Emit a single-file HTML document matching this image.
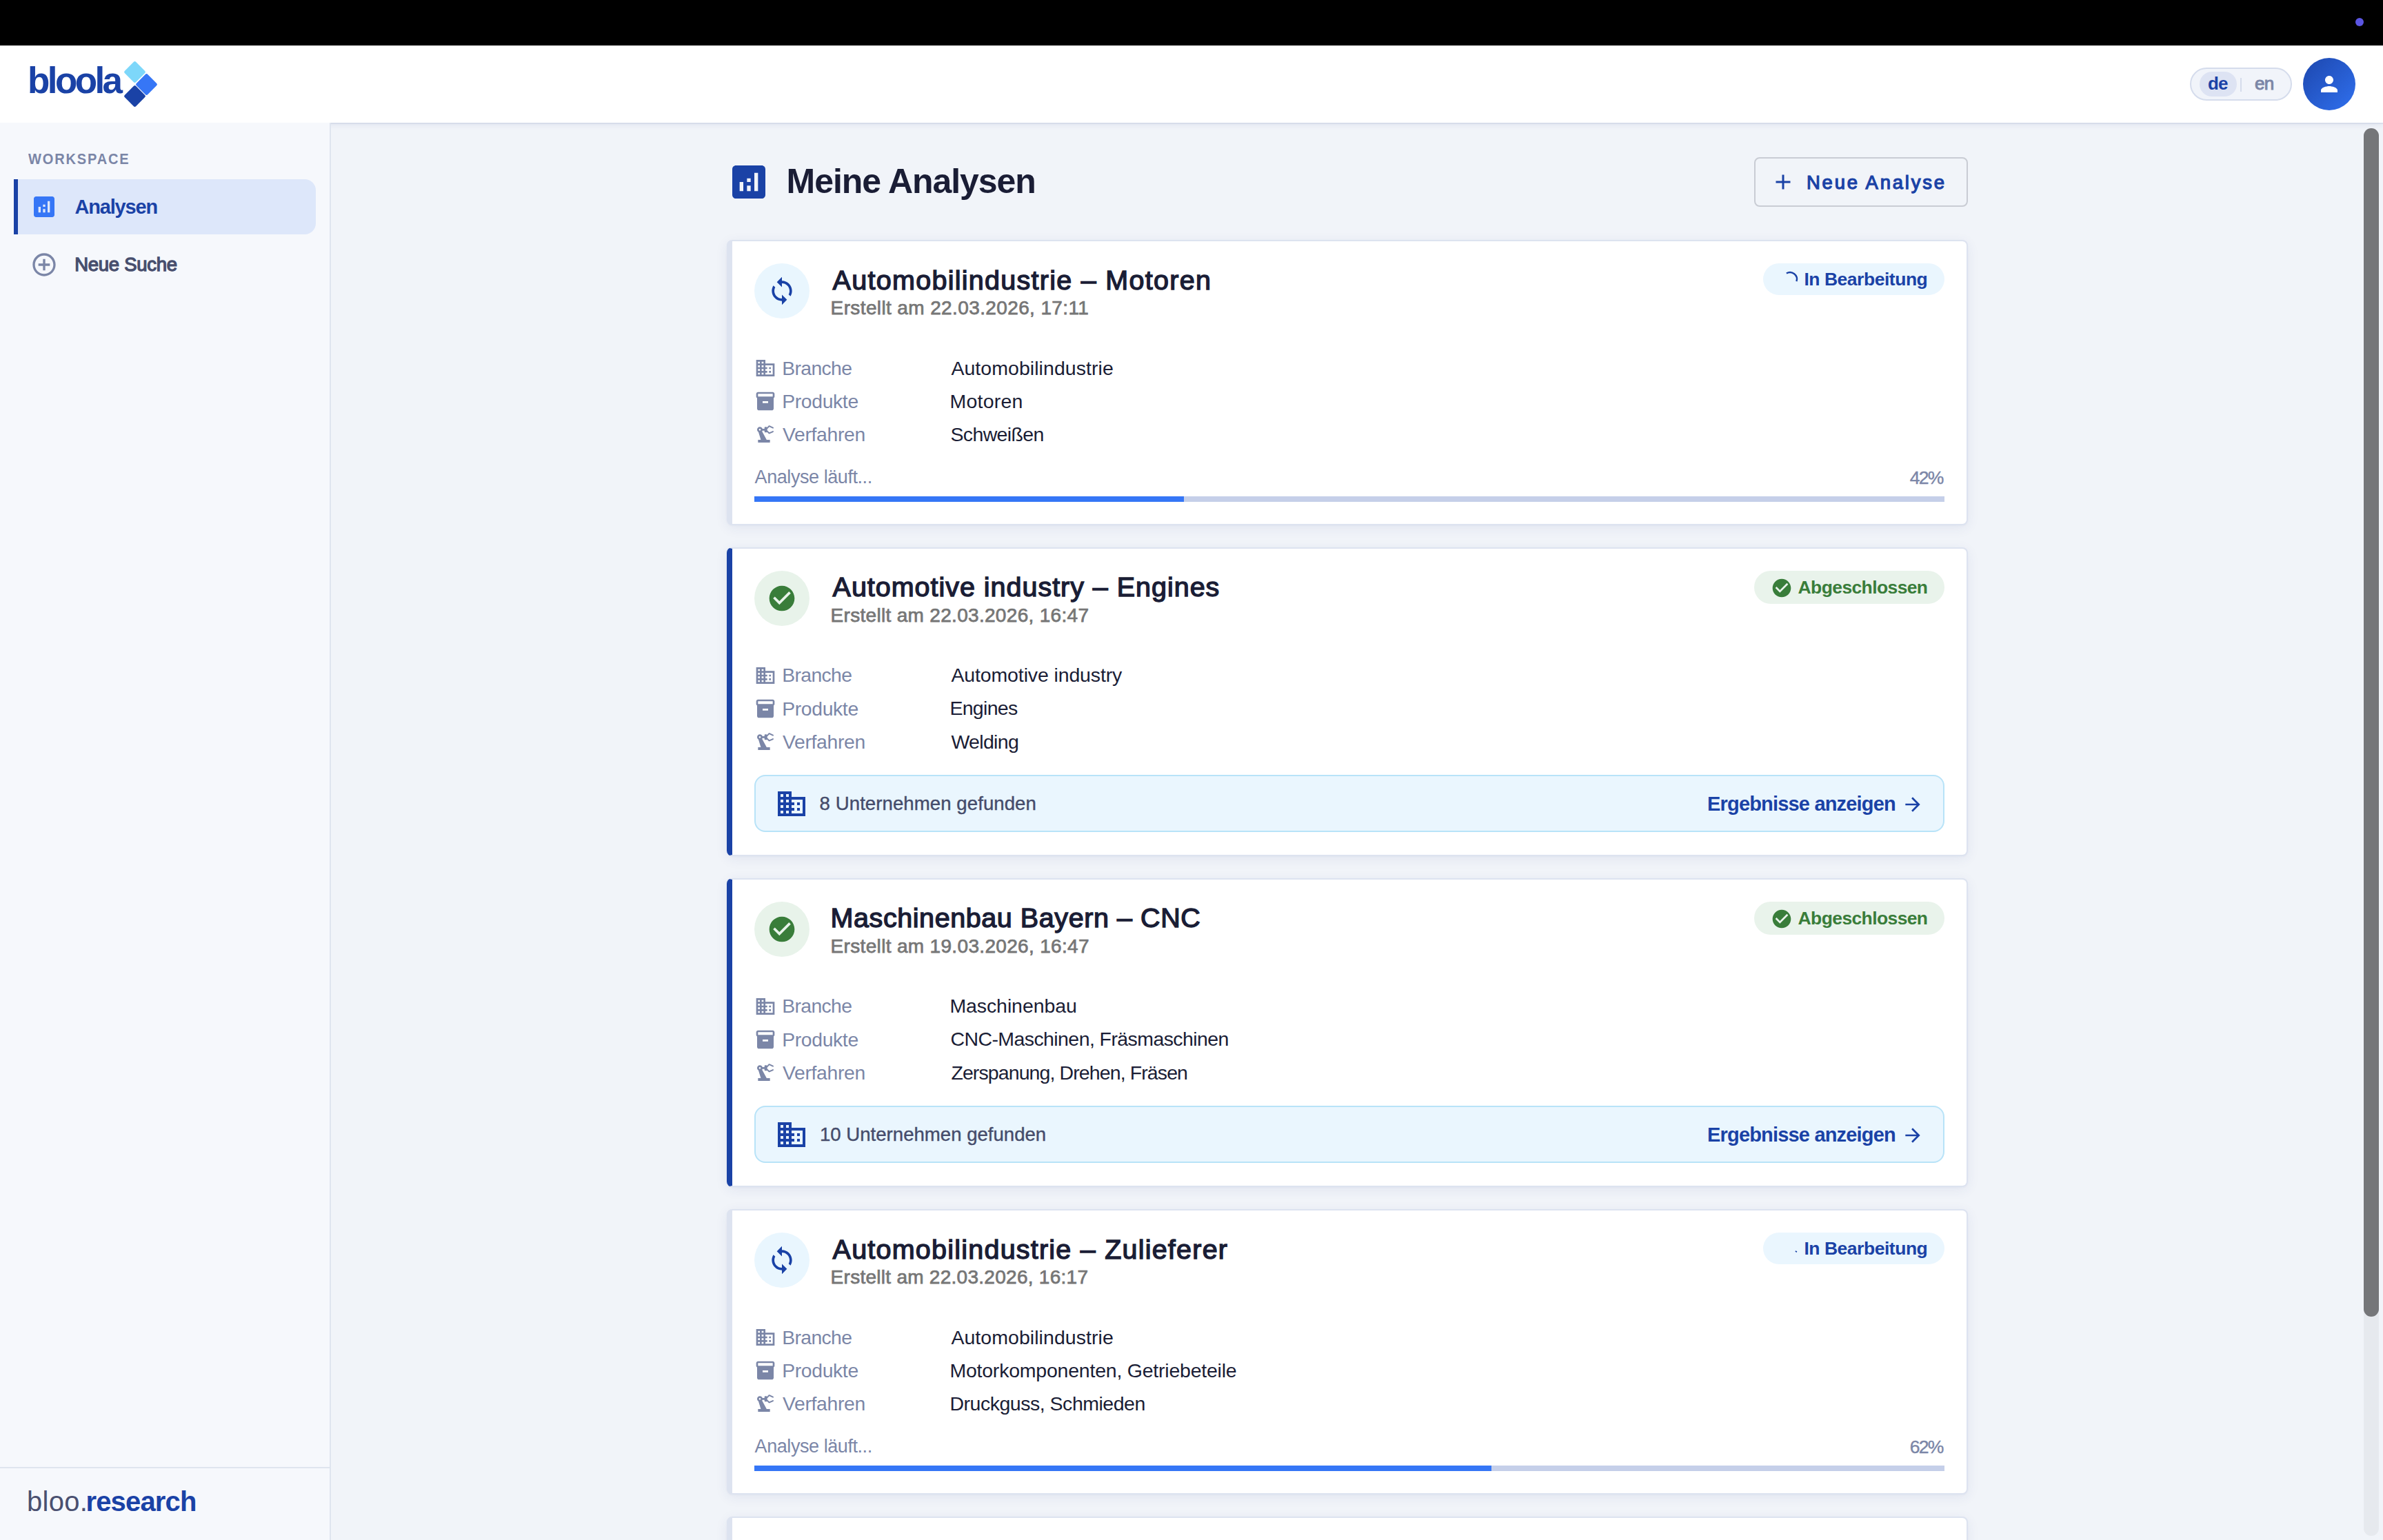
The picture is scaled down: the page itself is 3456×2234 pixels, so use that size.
<!DOCTYPE html>
<html lang="de"><head><meta charset="utf-8"><title>Meine Analysen</title>
<style>
html,body{margin:0;padding:0;}
body{width:3456px;height:2234px;overflow:hidden;position:relative;background:#f1f4f9;
font-family:"Liberation Sans",sans-serif;}
.b,.t,.ic,.card{position:absolute;}
.t{line-height:1;white-space:pre;}
.ic{display:block;overflow:visible;}
.card{left:1054px;width:1800px;box-sizing:border-box;background:#fff;border:2px solid #dde3f0;
border-left-width:8px;border-radius:8px;box-shadow:0 4px 18px rgba(40,60,130,0.075),0 1px 3px rgba(40,60,130,0.03);}
</style></head>
<body>
<script>(function(){var w=window.innerWidth;if(w&&Math.abs(w-3456)>2){document.documentElement.style.zoom=w/3456;}})();</script>
<div class="b" style="left:480px;top:178px;width:2976px;height:2056px;background:#f1f4f9;"></div>
<div class="b" style="left:480px;top:178px;width:2976px;height:2px;background:#e2e7f1;"></div>
<div class="card" style="top:348px;height:414px;border-left-color:#dde3f0"></div>
<div class="b" style="left:1094px;top:382.4px;width:80px;height:80px;border-radius:50%;background:#e9f6fe;"></div>
<svg class="ic" style="left:1112.00px;top:400.40px;width:44px;height:44px;" viewBox="0 0 24 24"><path fill="#1a42a6" d="M12 4V1L8 5l4 4V6c3.31 0 6 2.69 6 6 0 1.01-.25 1.97-.7 2.8l1.46 1.46C19.54 15.03 20 13.57 20 12c0-4.42-3.58-8-8-8zm0 14c-3.31 0-6-2.69-6-6 0-1.01.25-1.97.7-2.8L5.24 7.74C4.46 8.97 4 10.43 4 12c0 4.42 3.58 8 8 8v3l4-4-4-4v3z"/></svg>
<span class="t" id="c0title" style="font-size:39.5px;top:386.56px;color:#1a1d35;font-weight:400;letter-spacing:1.281px;-webkit-text-stroke:1.4px #1a1d35;left:1207.60px;">Automobilindustrie – Motoren</span>
<span class="t" id="c0date" style="font-size:28px;top:433.00px;color:#767676;font-weight:400;letter-spacing:0.379px;-webkit-text-stroke:0.75px #767676;left:1204.60px;">Erstellt am 22.03.2026, 17:11</span>
<div class="b" style="left:2557px;top:382px;width:263px;height:46px;border-radius:23px;background:#eaf6fe;"></div>
<svg class="ic" style="left:2582.00px;top:391.00px;width:28px;height:28px" viewBox="2582.00 391.00 28 28"><path fill="none" stroke="#1a42a6" stroke-width="2.4" d="M2590.90 396.51A9.9 9.9 0 0 1 2605.42 408.06"/></svg>
<span class="t" id="c0badge" style="font-size:26.5px;top:391.77px;color:#1a42a6;font-weight:700;letter-spacing:-0.469px;left:2616.40px;">In Bearbeitung</span>
<svg class="ic" style="left:1094.00px;top:518.00px;width:32px;height:32px;" viewBox="0 0 24 24"><path fill="#7b86a7" d="M12 7V3H2v18h20V7H12zM6 19H4v-2h2v2zm0-4H4v-2h2v2zm0-4H4V9h2v2zm0-4H4V5h2v2zm4 12H8v-2h2v2zm0-4H8v-2h2v2zm0-4H8V9h2v2zm0-4H8V5h2v2zm10 12h-8v-2h2v-2h-2v-2h2v-2h-2V9h8v10zm-2-8h-2v2h2v-2zm0 4h-2v2h2v-2z"/></svg>
<span class="t" id="c0l0" style="font-size:28.3px;top:519.84px;color:#7b86a7;font-weight:400;letter-spacing:-0.600px;left:1134.20px;">Branche</span>
<span class="t" id="c0v0" style="font-size:28.5px;top:519.67px;color:#1a1d35;font-weight:400;letter-spacing:0.053px;left:1379.40px;">Automobilindustrie</span>
<svg class="ic" style="left:1094.00px;top:566.10px;width:32px;height:32px;" viewBox="0 0 24 24"><path fill="#7b86a7" d="M20 2H4c-1 0-2 .9-2 2v3.01c0 .72.43 1.34 1 1.69V20c0 1.1 1.1 2 2 2h14c.9 0 2-.9 2-2V8.7c.57-.35 1-.97 1-1.69V4c0-1.1-1-2-2-2zm-5 12H9v-2h6v2zm5-7H4V4h16v3z"/></svg>
<span class="t" id="c0l1" style="font-size:28.3px;top:568.04px;color:#7b86a7;font-weight:400;letter-spacing:-0.329px;left:1134.20px;">Produkte</span>
<span class="t" id="c0v1" style="font-size:28.5px;top:567.87px;color:#1a1d35;font-weight:400;letter-spacing:0.250px;left:1377.40px;">Motoren</span>
<svg class="ic" style="left:1094.00px;top:614.20px;width:32px;height:32px;" viewBox="0 0 24 24"><path fill="#7b86a7" d="M19.93 8.35l-3.6 1.68L14 7.7V6.3l2.33-2.33 3.6 1.68c.38.18.82.01 1-.36.18-.38.01-.82-.36-1L16.65 2.5c-.38-.18-.83-.1-1.13.2l-1.74 1.74c-.18-.27-.49-.44-.85-.44H12c-.55 0-1 .45-1 1v1H8.82C8.4 4.84 7.3 4 6 4 4.34 4 3 5.34 3 7c0 1.1.6 2.05 1.48 2.58L7.08 18H4v3h13v-3h-3.62L8.41 8.77c.17-.24.31-.49.41-.77H11v1c0 .55.45 1 1 1h.93c.36 0 .67-.17.85-.44l1.74 1.74c.3.3.75.38 1.13.2l3.92-1.83c.38-.18.54-.62.36-1-.18-.37-.62-.54-1-.36zM6 8c-.55 0-1-.45-1-1s.45-1 1-1 1 .45 1 1-.45 1-1 1z"/></svg>
<span class="t" id="c0l2" style="font-size:28.3px;top:616.24px;color:#7b86a7;font-weight:400;letter-spacing:-0.312px;left:1135.00px;">Verfahren</span>
<span class="t" id="c0v2" style="font-size:28.5px;top:616.07px;color:#1a1d35;font-weight:400;letter-spacing:-0.625px;left:1378.40px;">Schweißen</span>
<span class="t" id="c0run" style="font-size:27px;top:679.14px;color:#7b86a7;font-weight:400;letter-spacing:-0.433px;left:1094.60px;">Analyse läuft...</span>
<span class="t" id="c0pct" style="font-size:26.5px;top:680.07px;color:#7b86a7;font-weight:400;letter-spacing:-1.800px;-webkit-text-stroke:0.4px #7b86a7;right:638.60px;">42%</span>
<div class="b" style="left:1094px;top:720px;width:1726px;height:8px;background:#c5cfe9;"></div>
<div class="b" style="left:1094px;top:720px;width:623px;height:8px;background:#3576f6;"></div>
<div class="card" style="top:794px;height:448px;border-left-color:#1a42a6"></div>
<div class="b" style="left:1094px;top:827.9px;width:80px;height:80px;border-radius:50%;background:#e8f3ea;"></div>
<svg class="ic" style="left:1112.00px;top:845.90px;width:44px;height:44px;" viewBox="0 0 24 24"><path fill="#397d3a" d="M12 2C6.48 2 2 6.48 2 12s4.48 10 10 10 10-4.48 10-10S17.52 2 12 2zm-2 15l-5-5 1.41-1.41L10 14.17l7.59-7.59L19 8l-9 9z"/></svg>
<span class="t" id="c1title" style="font-size:39.5px;top:832.06px;color:#1a1d35;font-weight:400;letter-spacing:0.971px;-webkit-text-stroke:1.4px #1a1d35;left:1207.60px;">Automotive industry – Engines</span>
<span class="t" id="c1date" style="font-size:28px;top:878.50px;color:#767676;font-weight:400;letter-spacing:0.307px;-webkit-text-stroke:0.75px #767676;left:1204.60px;">Erstellt am 22.03.2026, 16:47</span>
<div class="b" style="left:2544px;top:828px;width:276px;height:48px;border-radius:24px;background:#e9f3eb;"></div>
<svg class="ic" style="left:2568.00px;top:836.50px;width:32px;height:32px;" viewBox="0 0 24 24"><path fill="#397d3a" d="M12 2C6.48 2 2 6.48 2 12s4.48 10 10 10 10-4.48 10-10S17.52 2 12 2zm-2 15l-5-5 1.41-1.41L10 14.17l7.59-7.59L19 8l-9 9z"/></svg>
<span class="t" id="c1badge" style="font-size:26.5px;top:838.87px;color:#397d3a;font-weight:700;letter-spacing:-0.617px;left:2607.60px;">Abgeschlossen</span>
<svg class="ic" style="left:1094.00px;top:963.50px;width:32px;height:32px;" viewBox="0 0 24 24"><path fill="#7b86a7" d="M12 7V3H2v18h20V7H12zM6 19H4v-2h2v2zm0-4H4v-2h2v2zm0-4H4V9h2v2zm0-4H4V5h2v2zm4 12H8v-2h2v2zm0-4H8v-2h2v2zm0-4H8V9h2v2zm0-4H8V5h2v2zm10 12h-8v-2h2v-2h-2v-2h2v-2h-2V9h8v10zm-2-8h-2v2h2v-2zm0 4h-2v2h2v-2z"/></svg>
<span class="t" id="c1l0" style="font-size:28.3px;top:965.34px;color:#7b86a7;font-weight:400;letter-spacing:-0.600px;left:1134.20px;">Branche</span>
<span class="t" id="c1v0" style="font-size:28.5px;top:965.17px;color:#1a1d35;font-weight:400;letter-spacing:-0.128px;left:1379.40px;">Automotive industry</span>
<svg class="ic" style="left:1094.00px;top:1011.60px;width:32px;height:32px;" viewBox="0 0 24 24"><path fill="#7b86a7" d="M20 2H4c-1 0-2 .9-2 2v3.01c0 .72.43 1.34 1 1.69V20c0 1.1 1.1 2 2 2h14c.9 0 2-.9 2-2V8.7c.57-.35 1-.97 1-1.69V4c0-1.1-1-2-2-2zm-5 12H9v-2h6v2zm5-7H4V4h16v3z"/></svg>
<span class="t" id="c1l1" style="font-size:28.3px;top:1013.54px;color:#7b86a7;font-weight:400;letter-spacing:-0.329px;left:1134.20px;">Produkte</span>
<span class="t" id="c1v1" style="font-size:28.5px;top:1013.37px;color:#1a1d35;font-weight:400;letter-spacing:-0.700px;left:1377.40px;">Engines</span>
<svg class="ic" style="left:1094.00px;top:1059.70px;width:32px;height:32px;" viewBox="0 0 24 24"><path fill="#7b86a7" d="M19.93 8.35l-3.6 1.68L14 7.7V6.3l2.33-2.33 3.6 1.68c.38.18.82.01 1-.36.18-.38.01-.82-.36-1L16.65 2.5c-.38-.18-.83-.1-1.13.2l-1.74 1.74c-.18-.27-.49-.44-.85-.44H12c-.55 0-1 .45-1 1v1H8.82C8.4 4.84 7.3 4 6 4 4.34 4 3 5.34 3 7c0 1.1.6 2.05 1.48 2.58L7.08 18H4v3h13v-3h-3.62L8.41 8.77c.17-.24.31-.49.41-.77H11v1c0 .55.45 1 1 1h.93c.36 0 .67-.17.85-.44l1.74 1.74c.3.3.75.38 1.13.2l3.92-1.83c.38-.18.54-.62.36-1-.18-.37-.62-.54-1-.36zM6 8c-.55 0-1-.45-1-1s.45-1 1-1 1 .45 1 1-.45 1-1 1z"/></svg>
<span class="t" id="c1l2" style="font-size:28.3px;top:1061.74px;color:#7b86a7;font-weight:400;letter-spacing:-0.312px;left:1135.00px;">Verfahren</span>
<span class="t" id="c1v2" style="font-size:28.5px;top:1061.57px;color:#1a1d35;font-weight:400;letter-spacing:-0.683px;left:1379.40px;">Welding</span>
<div class="b" style="left:1094px;top:1124px;width:1726px;height:83px;box-sizing:border-box;border:2px solid #b8e3f8;border-radius:16px;background:#eaf6fe;"></div>
<svg class="ic" style="left:1124.00px;top:1142.10px;width:48px;height:48px;" viewBox="0 0 24 24"><path fill="#1a42a6" d="M12 7V3H2v18h20V7H12zM6 19H4v-2h2v2zm0-4H4v-2h2v2zm0-4H4V9h2v2zm0-4H4V5h2v2zm4 12H8v-2h2v2zm0-4H8v-2h2v2zm0-4H8V9h2v2zm0-4H8V5h2v2zm10 12h-8v-2h2v-2h-2v-2h2v-2h-2V9h8v10zm-2-8h-2v2h2v-2zm0 4h-2v2h2v-2z"/></svg>
<span class="t" id="c1found" style="font-size:27.6px;top:1151.94px;color:#454c6b;font-weight:400;letter-spacing:0.062px;-webkit-text-stroke:0.4px #454c6b;left:1188.60px;">8 Unternehmen gefunden</span>
<span class="t" id="c1res" style="font-size:29px;top:1151.85px;color:#1a42a6;font-weight:700;letter-spacing:-0.817px;left:2476.00px;">Ergebnisse anzeigen</span>
<svg class="ic" style="left:2758.20px;top:1151.00px;width:32px;height:32px;" viewBox="0 0 24 24"><path fill="#1a42a6" d="M12 4l-1.41 1.41L16.17 11H4v2h12.17l-5.58 5.59L12 20l8-8z"/></svg>
<div class="card" style="top:1274px;height:448px;border-left-color:#1a42a6"></div>
<div class="b" style="left:1094px;top:1307.9px;width:80px;height:80px;border-radius:50%;background:#e8f3ea;"></div>
<svg class="ic" style="left:1112.00px;top:1325.90px;width:44px;height:44px;" viewBox="0 0 24 24"><path fill="#397d3a" d="M12 2C6.48 2 2 6.48 2 12s4.48 10 10 10 10-4.48 10-10S17.52 2 12 2zm-2 15l-5-5 1.41-1.41L10 14.17l7.59-7.59L19 8l-9 9z"/></svg>
<span class="t" id="c2title" style="font-size:39.5px;top:1312.06px;color:#1a1d35;font-weight:400;letter-spacing:0.567px;-webkit-text-stroke:1.4px #1a1d35;left:1204.60px;">Maschinenbau Bayern – CNC</span>
<span class="t" id="c2date" style="font-size:28px;top:1358.50px;color:#767676;font-weight:400;letter-spacing:0.329px;-webkit-text-stroke:0.75px #767676;left:1204.60px;">Erstellt am 19.03.2026, 16:47</span>
<div class="b" style="left:2544px;top:1308px;width:276px;height:48px;border-radius:24px;background:#e9f3eb;"></div>
<svg class="ic" style="left:2568.00px;top:1316.50px;width:32px;height:32px;" viewBox="0 0 24 24"><path fill="#397d3a" d="M12 2C6.48 2 2 6.48 2 12s4.48 10 10 10 10-4.48 10-10S17.52 2 12 2zm-2 15l-5-5 1.41-1.41L10 14.17l7.59-7.59L19 8l-9 9z"/></svg>
<span class="t" id="c2badge" style="font-size:26.5px;top:1318.87px;color:#397d3a;font-weight:700;letter-spacing:-0.617px;left:2607.60px;">Abgeschlossen</span>
<svg class="ic" style="left:1094.00px;top:1443.50px;width:32px;height:32px;" viewBox="0 0 24 24"><path fill="#7b86a7" d="M12 7V3H2v18h20V7H12zM6 19H4v-2h2v2zm0-4H4v-2h2v2zm0-4H4V9h2v2zm0-4H4V5h2v2zm4 12H8v-2h2v2zm0-4H8v-2h2v2zm0-4H8V9h2v2zm0-4H8V5h2v2zm10 12h-8v-2h2v-2h-2v-2h2v-2h-2V9h8v10zm-2-8h-2v2h2v-2zm0 4h-2v2h2v-2z"/></svg>
<span class="t" id="c2l0" style="font-size:28.3px;top:1445.34px;color:#7b86a7;font-weight:400;letter-spacing:-0.600px;left:1134.20px;">Branche</span>
<span class="t" id="c2v0" style="font-size:28.5px;top:1445.17px;color:#1a1d35;font-weight:400;letter-spacing:-0.091px;left:1377.40px;">Maschinenbau</span>
<svg class="ic" style="left:1094.00px;top:1491.60px;width:32px;height:32px;" viewBox="0 0 24 24"><path fill="#7b86a7" d="M20 2H4c-1 0-2 .9-2 2v3.01c0 .72.43 1.34 1 1.69V20c0 1.1 1.1 2 2 2h14c.9 0 2-.9 2-2V8.7c.57-.35 1-.97 1-1.69V4c0-1.1-1-2-2-2zm-5 12H9v-2h6v2zm5-7H4V4h16v3z"/></svg>
<span class="t" id="c2l1" style="font-size:28.3px;top:1493.54px;color:#7b86a7;font-weight:400;letter-spacing:-0.329px;left:1134.20px;">Produkte</span>
<span class="t" id="c2v1" style="font-size:28.5px;top:1493.37px;color:#1a1d35;font-weight:400;letter-spacing:-0.581px;left:1378.40px;">CNC-Maschinen, Fräsmaschinen</span>
<svg class="ic" style="left:1094.00px;top:1539.70px;width:32px;height:32px;" viewBox="0 0 24 24"><path fill="#7b86a7" d="M19.93 8.35l-3.6 1.68L14 7.7V6.3l2.33-2.33 3.6 1.68c.38.18.82.01 1-.36.18-.38.01-.82-.36-1L16.65 2.5c-.38-.18-.83-.1-1.13.2l-1.74 1.74c-.18-.27-.49-.44-.85-.44H12c-.55 0-1 .45-1 1v1H8.82C8.4 4.84 7.3 4 6 4 4.34 4 3 5.34 3 7c0 1.1.6 2.05 1.48 2.58L7.08 18H4v3h13v-3h-3.62L8.41 8.77c.17-.24.31-.49.41-.77H11v1c0 .55.45 1 1 1h.93c.36 0 .67-.17.85-.44l1.74 1.74c.3.3.75.38 1.13.2l3.92-1.83c.38-.18.54-.62.36-1-.18-.37-.62-.54-1-.36zM6 8c-.55 0-1-.45-1-1s.45-1 1-1 1 .45 1 1-.45 1-1 1z"/></svg>
<span class="t" id="c2l2" style="font-size:28.3px;top:1541.74px;color:#7b86a7;font-weight:400;letter-spacing:-0.312px;left:1135.00px;">Verfahren</span>
<span class="t" id="c2v2" style="font-size:28.5px;top:1541.57px;color:#1a1d35;font-weight:400;letter-spacing:-0.896px;left:1379.40px;">Zerspanung, Drehen, Fräsen</span>
<div class="b" style="left:1094px;top:1604px;width:1726px;height:83px;box-sizing:border-box;border:2px solid #b8e3f8;border-radius:16px;background:#eaf6fe;"></div>
<svg class="ic" style="left:1124.00px;top:1622.10px;width:48px;height:48px;" viewBox="0 0 24 24"><path fill="#1a42a6" d="M12 7V3H2v18h20V7H12zM6 19H4v-2h2v2zm0-4H4v-2h2v2zm0-4H4V9h2v2zm0-4H4V5h2v2zm4 12H8v-2h2v2zm0-4H8v-2h2v2zm0-4H8V9h2v2zm0-4H8V5h2v2zm10 12h-8v-2h2v-2h-2v-2h2v-2h-2V9h8v10zm-2-8h-2v2h2v-2zm0 4h-2v2h2v-2z"/></svg>
<span class="t" id="c2found" style="font-size:27.6px;top:1631.94px;color:#454c6b;font-weight:400;letter-spacing:-0.005px;-webkit-text-stroke:0.4px #454c6b;left:1189.00px;">10 Unternehmen gefunden</span>
<span class="t" id="c2res" style="font-size:29px;top:1631.85px;color:#1a42a6;font-weight:700;letter-spacing:-0.817px;left:2476.00px;">Ergebnisse anzeigen</span>
<svg class="ic" style="left:2758.20px;top:1631.00px;width:32px;height:32px;" viewBox="0 0 24 24"><path fill="#1a42a6" d="M12 4l-1.41 1.41L16.17 11H4v2h12.17l-5.58 5.59L12 20l8-8z"/></svg>
<div class="card" style="top:1754px;height:414px;border-left-color:#dde3f0"></div>
<div class="b" style="left:1094px;top:1788.4px;width:80px;height:80px;border-radius:50%;background:#e9f6fe;"></div>
<svg class="ic" style="left:1112.00px;top:1806.40px;width:44px;height:44px;" viewBox="0 0 24 24"><path fill="#1a42a6" d="M12 4V1L8 5l4 4V6c3.31 0 6 2.69 6 6 0 1.01-.25 1.97-.7 2.8l1.46 1.46C19.54 15.03 20 13.57 20 12c0-4.42-3.58-8-8-8zm0 14c-3.31 0-6-2.69-6-6 0-1.01.25-1.97.7-2.8L5.24 7.74C4.46 8.97 4 10.43 4 12c0 4.42 3.58 8 8 8v3l4-4-4-4v3z"/></svg>
<span class="t" id="c3title" style="font-size:39.5px;top:1792.56px;color:#1a1d35;font-weight:400;letter-spacing:1.223px;-webkit-text-stroke:1.4px #1a1d35;left:1207.60px;">Automobilindustrie – Zulieferer</span>
<span class="t" id="c3date" style="font-size:28px;top:1839.00px;color:#767676;font-weight:400;letter-spacing:0.271px;-webkit-text-stroke:0.75px #767676;left:1204.60px;">Erstellt am 22.03.2026, 16:17</span>
<div class="b" style="left:2557px;top:1788px;width:263px;height:46px;border-radius:23px;background:#eaf6fe;"></div>
<svg class="ic" style="left:2582.00px;top:1797.00px;width:28px;height:28px" viewBox="2582.00 1797.00 28 28"><path fill="none" stroke="#1a42a6" stroke-width="2.4" d="M2605.18 1814.71A9.9 9.9 0 0 1 2604.40 1816.25"/></svg>
<span class="t" id="c3badge" style="font-size:26.5px;top:1797.77px;color:#1a42a6;font-weight:700;letter-spacing:-0.469px;left:2616.40px;">In Bearbeitung</span>
<svg class="ic" style="left:1094.00px;top:1924.00px;width:32px;height:32px;" viewBox="0 0 24 24"><path fill="#7b86a7" d="M12 7V3H2v18h20V7H12zM6 19H4v-2h2v2zm0-4H4v-2h2v2zm0-4H4V9h2v2zm0-4H4V5h2v2zm4 12H8v-2h2v2zm0-4H8v-2h2v2zm0-4H8V9h2v2zm0-4H8V5h2v2zm10 12h-8v-2h2v-2h-2v-2h2v-2h-2V9h8v10zm-2-8h-2v2h2v-2zm0 4h-2v2h2v-2z"/></svg>
<span class="t" id="c3l0" style="font-size:28.3px;top:1925.84px;color:#7b86a7;font-weight:400;letter-spacing:-0.600px;left:1134.20px;">Branche</span>
<span class="t" id="c3v0" style="font-size:28.5px;top:1925.67px;color:#1a1d35;font-weight:400;letter-spacing:0.053px;left:1379.40px;">Automobilindustrie</span>
<svg class="ic" style="left:1094.00px;top:1972.10px;width:32px;height:32px;" viewBox="0 0 24 24"><path fill="#7b86a7" d="M20 2H4c-1 0-2 .9-2 2v3.01c0 .72.43 1.34 1 1.69V20c0 1.1 1.1 2 2 2h14c.9 0 2-.9 2-2V8.7c.57-.35 1-.97 1-1.69V4c0-1.1-1-2-2-2zm-5 12H9v-2h6v2zm5-7H4V4h16v3z"/></svg>
<span class="t" id="c3l1" style="font-size:28.3px;top:1974.04px;color:#7b86a7;font-weight:400;letter-spacing:-0.329px;left:1134.20px;">Produkte</span>
<span class="t" id="c3v1" style="font-size:28.5px;top:1973.87px;color:#1a1d35;font-weight:400;letter-spacing:-0.223px;left:1377.40px;">Motorkomponenten, Getriebeteile</span>
<svg class="ic" style="left:1094.00px;top:2020.20px;width:32px;height:32px;" viewBox="0 0 24 24"><path fill="#7b86a7" d="M19.93 8.35l-3.6 1.68L14 7.7V6.3l2.33-2.33 3.6 1.68c.38.18.82.01 1-.36.18-.38.01-.82-.36-1L16.65 2.5c-.38-.18-.83-.1-1.13.2l-1.74 1.74c-.18-.27-.49-.44-.85-.44H12c-.55 0-1 .45-1 1v1H8.82C8.4 4.84 7.3 4 6 4 4.34 4 3 5.34 3 7c0 1.1.6 2.05 1.48 2.58L7.08 18H4v3h13v-3h-3.62L8.41 8.77c.17-.24.31-.49.41-.77H11v1c0 .55.45 1 1 1h.93c.36 0 .67-.17.85-.44l1.74 1.74c.3.3.75.38 1.13.2l3.92-1.83c.38-.18.54-.62.36-1-.18-.37-.62-.54-1-.36zM6 8c-.55 0-1-.45-1-1s.45-1 1-1 1 .45 1 1-.45 1-1 1z"/></svg>
<span class="t" id="c3l2" style="font-size:28.3px;top:2022.24px;color:#7b86a7;font-weight:400;letter-spacing:-0.312px;left:1135.00px;">Verfahren</span>
<span class="t" id="c3v2" style="font-size:28.5px;top:2022.07px;color:#1a1d35;font-weight:400;letter-spacing:-0.479px;left:1377.40px;">Druckguss, Schmieden</span>
<span class="t" id="c3run" style="font-size:27px;top:2085.14px;color:#7b86a7;font-weight:400;letter-spacing:-0.433px;left:1094.60px;">Analyse läuft...</span>
<span class="t" id="c3pct" style="font-size:26.5px;top:2086.07px;color:#7b86a7;font-weight:400;letter-spacing:-1.800px;-webkit-text-stroke:0.4px #7b86a7;right:638.60px;">62%</span>
<div class="b" style="left:1094px;top:2126px;width:1726px;height:8px;background:#c5cfe9;"></div>
<div class="b" style="left:1094px;top:2126px;width:1069px;height:8px;background:#3576f6;"></div>
<div class="card" style="top:2200px;height:413px;border-left-color:#dde3f0"></div>
<svg class="ic" style="left:1054.00px;top:232.00px;width:64px;height:64px;" viewBox="0 0 24 24"><path fill="#1a42a6" d="M19 3H5c-1.1 0-2 .9-2 2v14c0 1.1.9 2 2 2h14c1.1 0 2-.9 2-2V5c0-1.1-.9-2-2-2zM9 17H7v-5h2v5zm4 0h-2v-3h2v3zm0-5h-2v-2h2v2zm4 5h-2V7h2v10z"/></svg>
<span class="t" id="ptitle" style="font-size:50px;top:238.28px;color:#1a1d35;font-weight:700;letter-spacing:-1.069px;left:1140.60px;">Meine Analysen</span>
<div class="b" style="left:2544px;top:228px;width:310px;height:72px;box-sizing:border-box;border:2px solid #c9ccd4;border-radius:8px;"></div>
<svg class="ic" style="left:2568.00px;top:246.00px;width:36px;height:36px;" viewBox="0 0 24 24"><path fill="#1a42a6" d="M19 13h-6v6h-2v-6H5v-2h6V5h2v6h6v2z"/></svg>
<span class="t" id="newbtn" style="font-size:27.4px;top:250.81px;color:#1a42a6;font-weight:400;letter-spacing:2.809px;-webkit-text-stroke:1.25px #1a42a6;left:2620.00px;">Neue Analyse</span>
<div class="b" style="left:3428px;top:186px;width:22px;height:2042px;border-radius:11px;background:#e6e9ee;"></div>
<div class="b" style="left:3428px;top:186px;width:22px;height:1724px;border-radius:11px;background:#757679;"></div>
<div class="b" style="left:0px;top:66px;width:3456px;height:112px;background:#fff;box-shadow:0 2px 10px rgba(40,60,130,0.10);"></div>
<span class="t" id="logo" style="font-size:53px;top:90.14px;color:#1a42a6;font-weight:700;letter-spacing:-3.600px;left:40.00px;">bloola</span>
<div class="b" style="left:184.0px;top:93.0px;width:23px;height:23px;background:#7dd7fa;border-radius:2.2px;transform:rotate(45deg);"></div>
<div class="b" style="left:201.4px;top:110.5px;width:23px;height:23px;background:#3676f6;border-radius:2.2px;transform:rotate(45deg);"></div>
<div class="b" style="left:184.0px;top:127.9px;width:23px;height:23px;background:#1a42a6;border-radius:2.2px;transform:rotate(45deg);"></div>
<div class="b" style="left:3176px;top:98px;width:148px;height:48px;box-sizing:border-box;border:2px solid #d5dcec;border-radius:24px;background:#f1f4fa;"></div>
<div class="b" style="left:3190px;top:104px;width:54px;height:36px;border-radius:18px;background:#dde3f3;"></div>
<span class="t" id="de" style="font-size:26px;top:107.59px;color:#1a42a6;font-weight:700;letter-spacing:-1.000px;left:3202.00px;">de</span>
<div class="b" style="left:3249px;top:113px;width:2px;height:20px;background:#d5dcec;"></div>
<span class="t" id="en" style="font-size:26px;top:107.59px;color:#7b86a7;font-weight:400;letter-spacing:-0.600px;-webkit-text-stroke:1.0px #7b86a7;left:3270.00px;">en</span>
<div class="b" style="left:3340px;top:84px;width:76px;height:76px;border-radius:50%;background:linear-gradient(135deg,#1d47ae,#3070ee);"></div>
<svg class="ic" style="left:3360.00px;top:104.00px;width:36px;height:36px;" viewBox="0 0 24 24"><path fill="#fff" d="M12 12c2.21 0 4-1.79 4-4s-1.79-4-4-4-4 1.79-4 4 1.79 4 4 4zm0 2c-2.67 0-8 1.34-8 4v2h16v-2c0-2.66-5.33-4-8-4z"/></svg>
<div class="b" style="left:0px;top:178px;width:478px;height:2056px;background:#f6f8fc;border-right:2px solid #dfe5ef;"></div>
<span class="t" id="ws" style="font-size:22.8px;top:218.90px;color:#7b86a7;font-weight:700;letter-spacing:2.075px;left:40.60px;transform:scaleX(0.88);transform-origin:0 0;">WORKSPACE</span>
<div class="b" style="left:20px;top:260px;width:438px;height:80px;box-sizing:border-box;border-left:6px solid #1a42a6;background:#dde7fa;border-radius:0 16px 16px 0;"></div>
<svg class="ic" style="left:44.00px;top:280.00px;width:40px;height:40px;" viewBox="0 0 24 24"><path fill="#3576f6" d="M19 3H5c-1.1 0-2 .9-2 2v14c0 1.1.9 2 2 2h14c1.1 0 2-.9 2-2V5c0-1.1-.9-2-2-2zM9 17H7v-5h2v5zm4 0h-2v-3h2v3zm0-5h-2v-2h2v2zm4 5h-2V7h2v10z"/></svg>
<span class="t" id="nav1" style="font-size:29px;top:285.65px;color:#1a42a6;font-weight:700;letter-spacing:-1.171px;left:108.40px;">Analysen</span>
<svg class="ic" style="left:44.00px;top:364.00px;width:40px;height:40px;" viewBox="0 0 24 24"><path fill="#7b86a7" d="M13 7h-2v4H7v2h4v4h2v-4h4v-2h-4V7zm-1-5C6.48 2 2 6.48 2 12s4.48 10 10 10 10-4.48 10-10S17.52 2 12 2zm0 18c-4.41 0-8-3.59-8-8s3.59-8 8-8 8 3.59 8 8-3.59 8-8 8z"/></svg>
<span class="t" id="nav2" style="font-size:27.5px;top:370.02px;color:#474e6d;font-weight:400;letter-spacing:-0.267px;-webkit-text-stroke:1.3px #474e6d;left:108.20px;">Neue Suche</span>
<div class="b" style="left:0px;top:2128px;width:478px;height:2px;background:#dfe5ef;"></div>
<span class="t" id="foot1" style="font-size:40px;top:2158.14px;color:#4a5070;font-weight:400;letter-spacing:0.300px;left:39.00px;">bloo.</span>
<span class="t" id="foot2" style="font-size:40px;top:2158.14px;color:#1a42a6;font-weight:700;letter-spacing:-0.830px;left:124.40px;">research</span>
<div class="b" style="left:0px;top:0px;width:3456px;height:66px;background:#000;"></div>
<div class="b" style="left:3416px;top:26.4px;width:12px;height:12px;border-radius:50%;background:#5b55e2;"></div>
</body></html>
